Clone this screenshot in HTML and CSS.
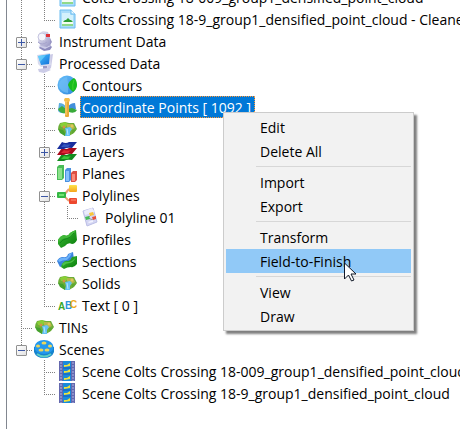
FILE: index.html
```html
<!DOCTYPE html>
<html lang="en">
<head>
<meta charset="utf-8">
<title>Project Tree</title>
<link rel="stylesheet" href="styles.css">
</head>
<body>
<svg class="sprite" aria-hidden="true">
  <defs>
    <linearGradient id="steel" x1="0" y1="0" x2="1" y2="1"><stop offset="0" stop-color="#f3f3fa"/><stop offset="1" stop-color="#9492c2"/></linearGradient>
    <linearGradient id="screen" x1="0" y1="0" x2="1" y2="1"><stop offset="0" stop-color="#48c4ff"/><stop offset="1" stop-color="#126fd8"/></linearGradient>
    <linearGradient id="leaf" x1="0" y1="0" x2="1" y2="1"><stop offset="0" stop-color="#3dbb35"/><stop offset="1" stop-color="#087c0b"/></linearGradient>
    <linearGradient id="water" x1="0" y1="0" x2="1" y2="1"><stop offset="0" stop-color="#67c0fa"/><stop offset="1" stop-color="#2f86dc"/></linearGradient>
    <linearGradient id="gold" x1="0" y1="0" x2="0" y2="1"><stop offset="0" stop-color="#ffe34a"/><stop offset="1" stop-color="#f5a51c"/></linearGradient>
  </defs>
  <symbol id="cloud-file" viewBox="0 0 20 20">
    <path d="M3 1h11l4 4v14H3z" fill="#a9dcfa" stroke="#6bbcf0" stroke-linejoin="round"/>
    <path d="M14 1v4h4" fill="#effaff" stroke="#6bbcf0"/>
    <path d="M5 4h8v2h3v6H5z" fill="#d3f1fc"/><path d="M5 12h11v3H5z" fill="#f4fcf4"/>
    <path d="M6 13l2-2h1l2-2 2 2h1l2 2z" fill="#2f9e35"/><path d="M5 15h11v2H5z" fill="#8fd98a"/>
  </symbol>
  <symbol id="instrument" viewBox="0 0 20 20">
    <path d="M7 14l8-1 3 3-2 3-6 1-5-3z" fill="#8d8bbd"/>
    <path d="M4 15l8-2 5 2-6 3z" fill="#cdcde8"/>
    <path d="M5 2l4-2 5 1 2 6 1 6-4 3-6-1-3-4z" fill="url(#steel)"/>
    <circle cx="8" cy="6" r="4" fill="#f5f5fb" stroke="#c5c4df"/>
    <path d="M4 11q4 4 9 0" fill="none" stroke="#a6a4cc"/>
    <path d="M12 3h4v3h-4z" fill="#e03139"/><path d="M16 7l2 4-2 3z" fill="#9996c4"/>
  </symbol>
  <symbol id="computer" viewBox="0 0 20 20">
    <path d="M14 2l5-1-2 14-4 3z" fill="#cbcae6"/>
    <path d="M3 2l13-2 1 12-10 2-3-3z" fill="#d8dbee"/>
    <path d="M4 3l12-2-1 10-8 1z" fill="url(#screen)"/>
    <path d="M4 3l8-1-6 7z" fill="#79dcff" opacity=".6"/>
    <path d="M9 13h4v3H9z" fill="#9a98c6"/><path d="M4 16l9-1 4 2-7 3-5-1z" fill="#cccce7"/>
  </symbol>
  <symbol id="contours" viewBox="0 0 20 20">
    <circle cx="10" cy="10" r="9.500" fill="url(#water)"/>
    <path d="M2 8q3-5 8-6 2 8 1 16-7-1-9-6z" fill="#70bdf5" opacity=".7"/>
    <path d="M17 3q-5 3-6 7 1 4 5 7 4-3 4-7 0-5-3-7z" fill="#19bd1c"/>
    <path d="M17 5q-2 5-1 10" fill="none" stroke="#3fd02f"/>
  </symbol>
  <symbol id="points" viewBox="0 0 20 20">
    <path d="M2 6q5 0 7 4v6q-6 1-8-2z" fill="#5aaedf"/>
    <path d="M1 12l4-3 4 3v4q-6 1-8-4z" fill="#42ac3d"/>
    <path d="M18 6q-5 0-7 4l2 4 6-2z" fill="#428fdb"/><path d="M11 12l4-1 5 2q-2 4-8 2z" fill="#39aa3a"/>
    <rect x="8" y="1" width="4" height="19" rx="1" fill="#e9aa38"/><rect x="7" y="1" width="6" height="4" rx="2" fill="#f4bd4a"/><path d="M9 4v14" stroke="#ffd77b"/>
  </symbol>
  <symbol id="terrain" viewBox="0 0 20 20">
    <path d="M1 10q0-3 2-6l5-1 4 1 5 0 3 6-3 4-5 3H8l-4-3z" fill="#6cae38"/>
    <path d="M3 5l5-2 3 2-2 3-5 0z" fill="#89cf36"/><path d="M10 5l6 0 2 4-4 2-4-3z" fill="#b3b84a"/>
    <circle cx="7" cy="8" r="1.500" fill="#d2914b"/><circle cx="15" cy="7" r="1.500" fill="#e0c65c"/>
    <path d="M8 9l5-1 2 2-2 3 0 4H8l1-4z" fill="#67c2f4"/><path d="M10 10l1 6" stroke="#b9eaff"/>
    <path d="M1 10l5 1 2 3 0 3-5-3z" fill="#45a12d"/><path d="M15 11l4 0-4 4z" fill="#5fa832"/>
  </symbol>
  <symbol id="layers" viewBox="0 0 20 20">
    <path d="M5 13q4 2 7 0h8l-5 6q-5-1-8 1H0z" fill="#138b1f"/><path d="M7 15q4 1 7 0l-3 3H4z" fill="#3bc83b"/>
    <path d="M5 7q4 2 7 0h8l-5 6q-5-1-8 1H0z" fill="#a90b1c"/><path d="M7 9q4 1 7 0l-3 3H4z" fill="#dc2937"/>
    <path d="M5 1q4 2 7 0h8l-5 6q-5-1-8 1H0z" fill="#182e9d"/><path d="M7 3q4 1 7 0l-3 3H4z" fill="#3156bf"/>
  </symbol>
  <symbol id="planes" viewBox="0 0 20 20">
    <path d="M0 4l2-2h5v13l-2 2H0z" fill="#4abc58"/><path d="M1 5h4v11H1z" fill="#8ce18b"/>
    <path d="M8 7l2-2h4v12l-2 2H8z" fill="#4a91e0"/><path d="M9 8h3v10H9z" fill="#86c1fb"/>
    <path d="M14 10l2-2h4v9l-2 2h-4z" fill="#dc5044"/><path d="M15 11h3v7h-3z" fill="#fa8c7b"/>
  </symbol>
  <symbol id="polyline" viewBox="0 0 20 20">
    <path d="M7 10l5-6M7 11l5 5" stroke="#eda078" stroke-width="2"/>
    <rect x="0" y="7" width="9" height="6" rx="1" fill="#35b845"/><path d="M2 9h5v2H2z" fill="#73e272"/>
    <rect x="12" y="0" width="8" height="7" rx="1" fill="url(#gold)"/>
    <rect x="12" y="13" width="8" height="6" rx="1" fill="#ed482e"/><path d="M14 15h5" stroke="#ff927b"/>
  </symbol>
  <symbol id="polyline-file" viewBox="0 0 20 20">
    <path d="M3 4l10-3 4 14-10 4z" fill="#d4d6f3" stroke="#bcbfe6"/><path d="M4 4l8-3 3 4-10 3z" fill="#ecedfb"/>
    <path d="M8 11l4-4M8 11l5 2" stroke="#999"/><path d="M9 6l4-1 1 3-4 1z" fill="#f8c63a"/>
    <path d="M5 10l4-1 1 3-4 1z" fill="#46bb56"/><path d="M12 10l4-1 0 3-3 1z" fill="#e6503d"/>
    <path d="M8 15l5-2 0 2-4 1z" fill="#f2f3ff"/>
  </symbol>
  <symbol id="profiles" viewBox="0 0 20 20">
    <path d="M1 11q2-4 6-5 4 2 6-2 3-2 6-3l1 10q-2 4-5 4-4-2-7 2l-4 2-3-4z" fill="url(#leaf)"/>
    <path d="M1 11q2-4 6-5 4 2 6-2 3-2 6-3-2 4-5 7-3 2-6 1-4 1-6 4z" fill="#42b93a"/><path d="M3 14q3-4 6-4 5-1 8-6" stroke="#158b1b" fill="none"/>
  </symbol>
  <symbol id="sections" viewBox="0 0 20 20">
    <path d="M0 10q2-4 6-4 4 1 5-3l5-2 1 8-6 4-8 3z" fill="#3b83dd"/><path d="M1 9q3-3 6-2 4 0 5-4l3-1q-2 5-5 7-5 0-8 2z" fill="#6db3fa"/>
    <path d="M5 13q3-4 6-3 3-1 4-4l5-1v8q-3 4-6 3-4 0-7 2l-3-2z" fill="url(#leaf)"/><path d="M5 13q3-3 6-2 4 0 8-5-2 5-6 6-4 0-7 3z" fill="#4cc147"/>
  </symbol>
  <symbol id="letters" viewBox="0 0 20 20">
    <text class="letter-green" x="1" y="15">A</text><text class="letter-blue" x="8" y="14">B</text><text class="letter-gold" x="13" y="13">C</text>
  </symbol>
  <symbol id="reel" viewBox="0 0 20 20">
    <path d="M0 8v5q2 6 10 6t10-6V8z" fill="#1683cd"/><path d="M3 15q7 5 14 0" fill="none" stroke="#5fd0c4" stroke-width="2"/>
    <ellipse cx="10" cy="8" rx="9.500" ry="7" fill="#2298ef"/>
    <g fill="#ead65c"><ellipse cx="10" cy="4" rx="2.500" ry="1.500"/><ellipse cx="4" cy="7" rx="2" ry="1.500"/><ellipse cx="16" cy="7" rx="2" ry="1.500"/><ellipse cx="7" cy="11" rx="2.500" ry="1.500"/><ellipse cx="13" cy="11" rx="2.500" ry="1.500"/></g>
  </symbol>
  <symbol id="film" viewBox="0 0 20 20">
    <path d="M2 0h16v20H2z" fill="#6468ae"/><path d="M6 0h8v20H6z" fill="#188bdb"/>
    <path d="M4 1v19M16 1v19" stroke="#8b8fc9" stroke-width="2" stroke-dasharray="2 1"/>
    <path d="M7 4l3 0 3-2v3l-6 1zM7 10l3 0 3-2v3l-6 1zM7 17l3 0 3-2v3l-6 1z" fill="#eee13d"/><path d="M6 7h8M6 13h8" stroke="#1759bb"/>
  </symbol>
</svg>

<main class="pane">
  <ul class="tree">
    <li class="row"><span class="guide line"></span><span class="guide tee"></span><svg class="icon"><use href="#cloud-file"/></svg><span class="label">Colts Crossing 18-009_group1_densified_point_cloud</span></li>
    <li class="row"><span class="guide line"></span><span class="guide elbow"></span><svg class="icon"><use href="#cloud-file"/></svg><span class="label">Colts Crossing 18-9_group1_densified_point_cloud - Cleaned</span></li>
    <li class="row"><span class="guide tee"><button class="toggle plus" aria-label="Expand Instrument Data"></button></span><svg class="icon"><use href="#instrument"/></svg><span class="label">Instrument Data</span></li>
    <li class="row"><span class="guide tee"><button class="toggle" aria-label="Collapse Processed Data"></button></span><svg class="icon"><use href="#computer"/></svg><span class="label">Processed Data</span></li>
    <li class="row"><span class="guide line"></span><span class="guide tee"></span><svg class="icon"><use href="#contours"/></svg><span class="label">Contours</span></li>
    <li class="row"><span class="guide line"></span><span class="guide tee"></span><svg class="icon"><use href="#points"/></svg><span class="label selected">Coordinate Points [ 1092 ]</span></li>
    <li class="row"><span class="guide line"></span><span class="guide tee"></span><svg class="icon"><use href="#terrain"/></svg><span class="label">Grids</span></li>
    <li class="row"><span class="guide line"></span><span class="guide tee"><button class="toggle plus" aria-label="Expand Layers"></button></span><svg class="icon"><use href="#layers"/></svg><span class="label">Layers</span></li>
    <li class="row"><span class="guide line"></span><span class="guide tee"></span><svg class="icon"><use href="#planes"/></svg><span class="label">Planes</span></li>
    <li class="row"><span class="guide line"></span><span class="guide tee"><button class="toggle" aria-label="Collapse Polylines"></button></span><svg class="icon"><use href="#polyline"/></svg><span class="label">Polylines</span></li>
    <li class="row"><span class="guide line"></span><span class="guide line"></span><span class="guide elbow"></span><svg class="icon"><use href="#polyline-file"/></svg><span class="label">Polyline 01</span></li>
    <li class="row"><span class="guide line"></span><span class="guide tee"></span><svg class="icon"><use href="#profiles"/></svg><span class="label">Profiles</span></li>
    <li class="row"><span class="guide line"></span><span class="guide tee"></span><svg class="icon"><use href="#sections"/></svg><span class="label">Sections</span></li>
    <li class="row"><span class="guide line"></span><span class="guide tee"></span><svg class="icon"><use href="#terrain"/></svg><span class="label">Solids</span></li>
    <li class="row"><span class="guide line"></span><span class="guide elbow"></span><svg class="icon"><use href="#letters"/></svg><span class="label">Text [ 0 ]</span></li>
    <li class="row"><span class="guide tee"></span><svg class="icon"><use href="#terrain"/></svg><span class="label">TINs</span></li>
    <li class="row"><span class="guide elbow"><button class="toggle" aria-label="Collapse Scenes"></button></span><svg class="icon"><use href="#reel"/></svg><span class="label">Scenes</span></li>
    <li class="row"><span class="guide"></span><span class="guide tee"></span><svg class="icon"><use href="#film"/></svg><span class="label">Scene Colts Crossing 18-009_group1_densified_point_cloud</span></li>
    <li class="row"><span class="guide"></span><span class="guide elbow"></span><svg class="icon"><use href="#film"/></svg><span class="label">Scene Colts Crossing 18-9_group1_densified_point_cloud</span></li>
  </ul>
</main>

<div class="menu" role="menu">
  <button class="item" role="menuitem">Edit</button>
  <button class="item" role="menuitem">Delete All</button>
  <hr class="separator">
  <button class="item" role="menuitem">Import</button>
  <button class="item" role="menuitem">Export</button>
  <hr class="separator">
  <button class="item" role="menuitem">Transform</button>
  <button class="item active" role="menuitem">Field-to-Finish</button>
  <hr class="separator">
  <button class="item" role="menuitem">View</button>
  <button class="item" role="menuitem">Draw</button>
</div>
<svg class="cursor" viewBox="0 0 13 20" aria-hidden="true"><path d="M.5 1v16l4-4 3 6 2.500-1-3-6H12z" fill="#fff" stroke="#111827"/></svg>
</body>
</html>
```
FILE: styles.css
```css
* {
  box-sizing: border-box;
}

body {
  margin: 0;
  overflow: hidden;
  background: #fff;
  color: #000;
  font-family: "Open Sans", "Noto Sans", sans-serif;
  font-size: 14px;
  line-height: 24px;
}

.sprite {
  position: absolute;
  width: 0;
  height: 0;
}

.pane {
  height: 100vh;
  margin-left: 6px;
  padding-left: 3px;
  border-left: 1px solid #828790;
  overflow: hidden;
}

/* The list is scrolled so that its first row is partly out of view. */
.tree {
  margin: -14px 0 0;
  padding: 0;
  list-style: none;
}

.row {
  display: flex;
  height: 22px;
  white-space: nowrap;
}

.guide {
  display: flex;
  flex: none;
  width: 23px;
  height: 22px;
  padding: 7px 0 0 6px;
  background-repeat: no-repeat;
}

.line {
  background-image: repeating-linear-gradient(#808080 0 1px, transparent 1px 2px);
  background-position: 11px 0;
  background-size: 1px 22px;
}

.tee,
.elbow {
  background-image:
    repeating-linear-gradient(#808080 0 1px, transparent 1px 2px),
    repeating-linear-gradient(90deg, #808080 0 1px, transparent 1px 2px);
  background-position: 11px 0, 11px 12px;
  background-size: 1px 22px, 12px 1px;
}

.elbow {
  background-size: 1px 12px, 12px 1px;
}

.toggle {
  width: 11px;
  height: 11px;
  padding: 0;
  border: 1px solid #919191;
  border-radius: 1px;
  background:
    linear-gradient(#3c57a5, #3c57a5) center / 7px 1px no-repeat,
    linear-gradient(135deg, #fff, #e2e2e2);
}

.plus {
  background:
    linear-gradient(#3c57a5, #3c57a5) center / 7px 1px no-repeat,
    linear-gradient(#3c57a5, #3c57a5) center / 1px 7px no-repeat,
    linear-gradient(135deg, #fff, #e2e2e2);
}

.icon {
  flex: none;
  width: 20px;
  height: 20px;
  margin: 1px 3px 0 1px;
}

.label {
  padding: 0 2px;
}

.selected {
  padding-right: 4px;
  background: #0078d7;
  color: #fff;
  outline: 1px dotted #ff9838;
  outline-offset: -1px;
}

.letter-green,
.letter-blue,
.letter-gold {
  font: bold 10px "Liberation Sans", sans-serif;
}

.letter-green {
  fill: #38a82b;
}

.letter-blue {
  fill: #2b94dd;
}

.letter-gold {
  fill: #efaa23;
}

.menu {
  position: absolute;
  top: 112px;
  left: 223px;
  width: 191px;
  padding: 2px;
  border: 1px solid #ccc;
  background: #f2f2f2;
  box-shadow: 3px 3px 2px rgba(0, 0, 0, 0.5);
}

.item {
  display: block;
  width: 100%;
  height: 24px;
  padding: 2px 0 0 34px;
  border: 0;
  background: none;
  color: #000;
  font: inherit;
  line-height: 22px;
  text-align: left;
}

.active {
  background: #91c9f7;
}

.separator {
  height: 1px;
  margin: 3px 0 3px 30px;
  border: 0;
  background: #d7d7d7;
}

.cursor {
  position: absolute;
  top: 262px;
  left: 344px;
  width: 13px;
  height: 20px;
}
```
